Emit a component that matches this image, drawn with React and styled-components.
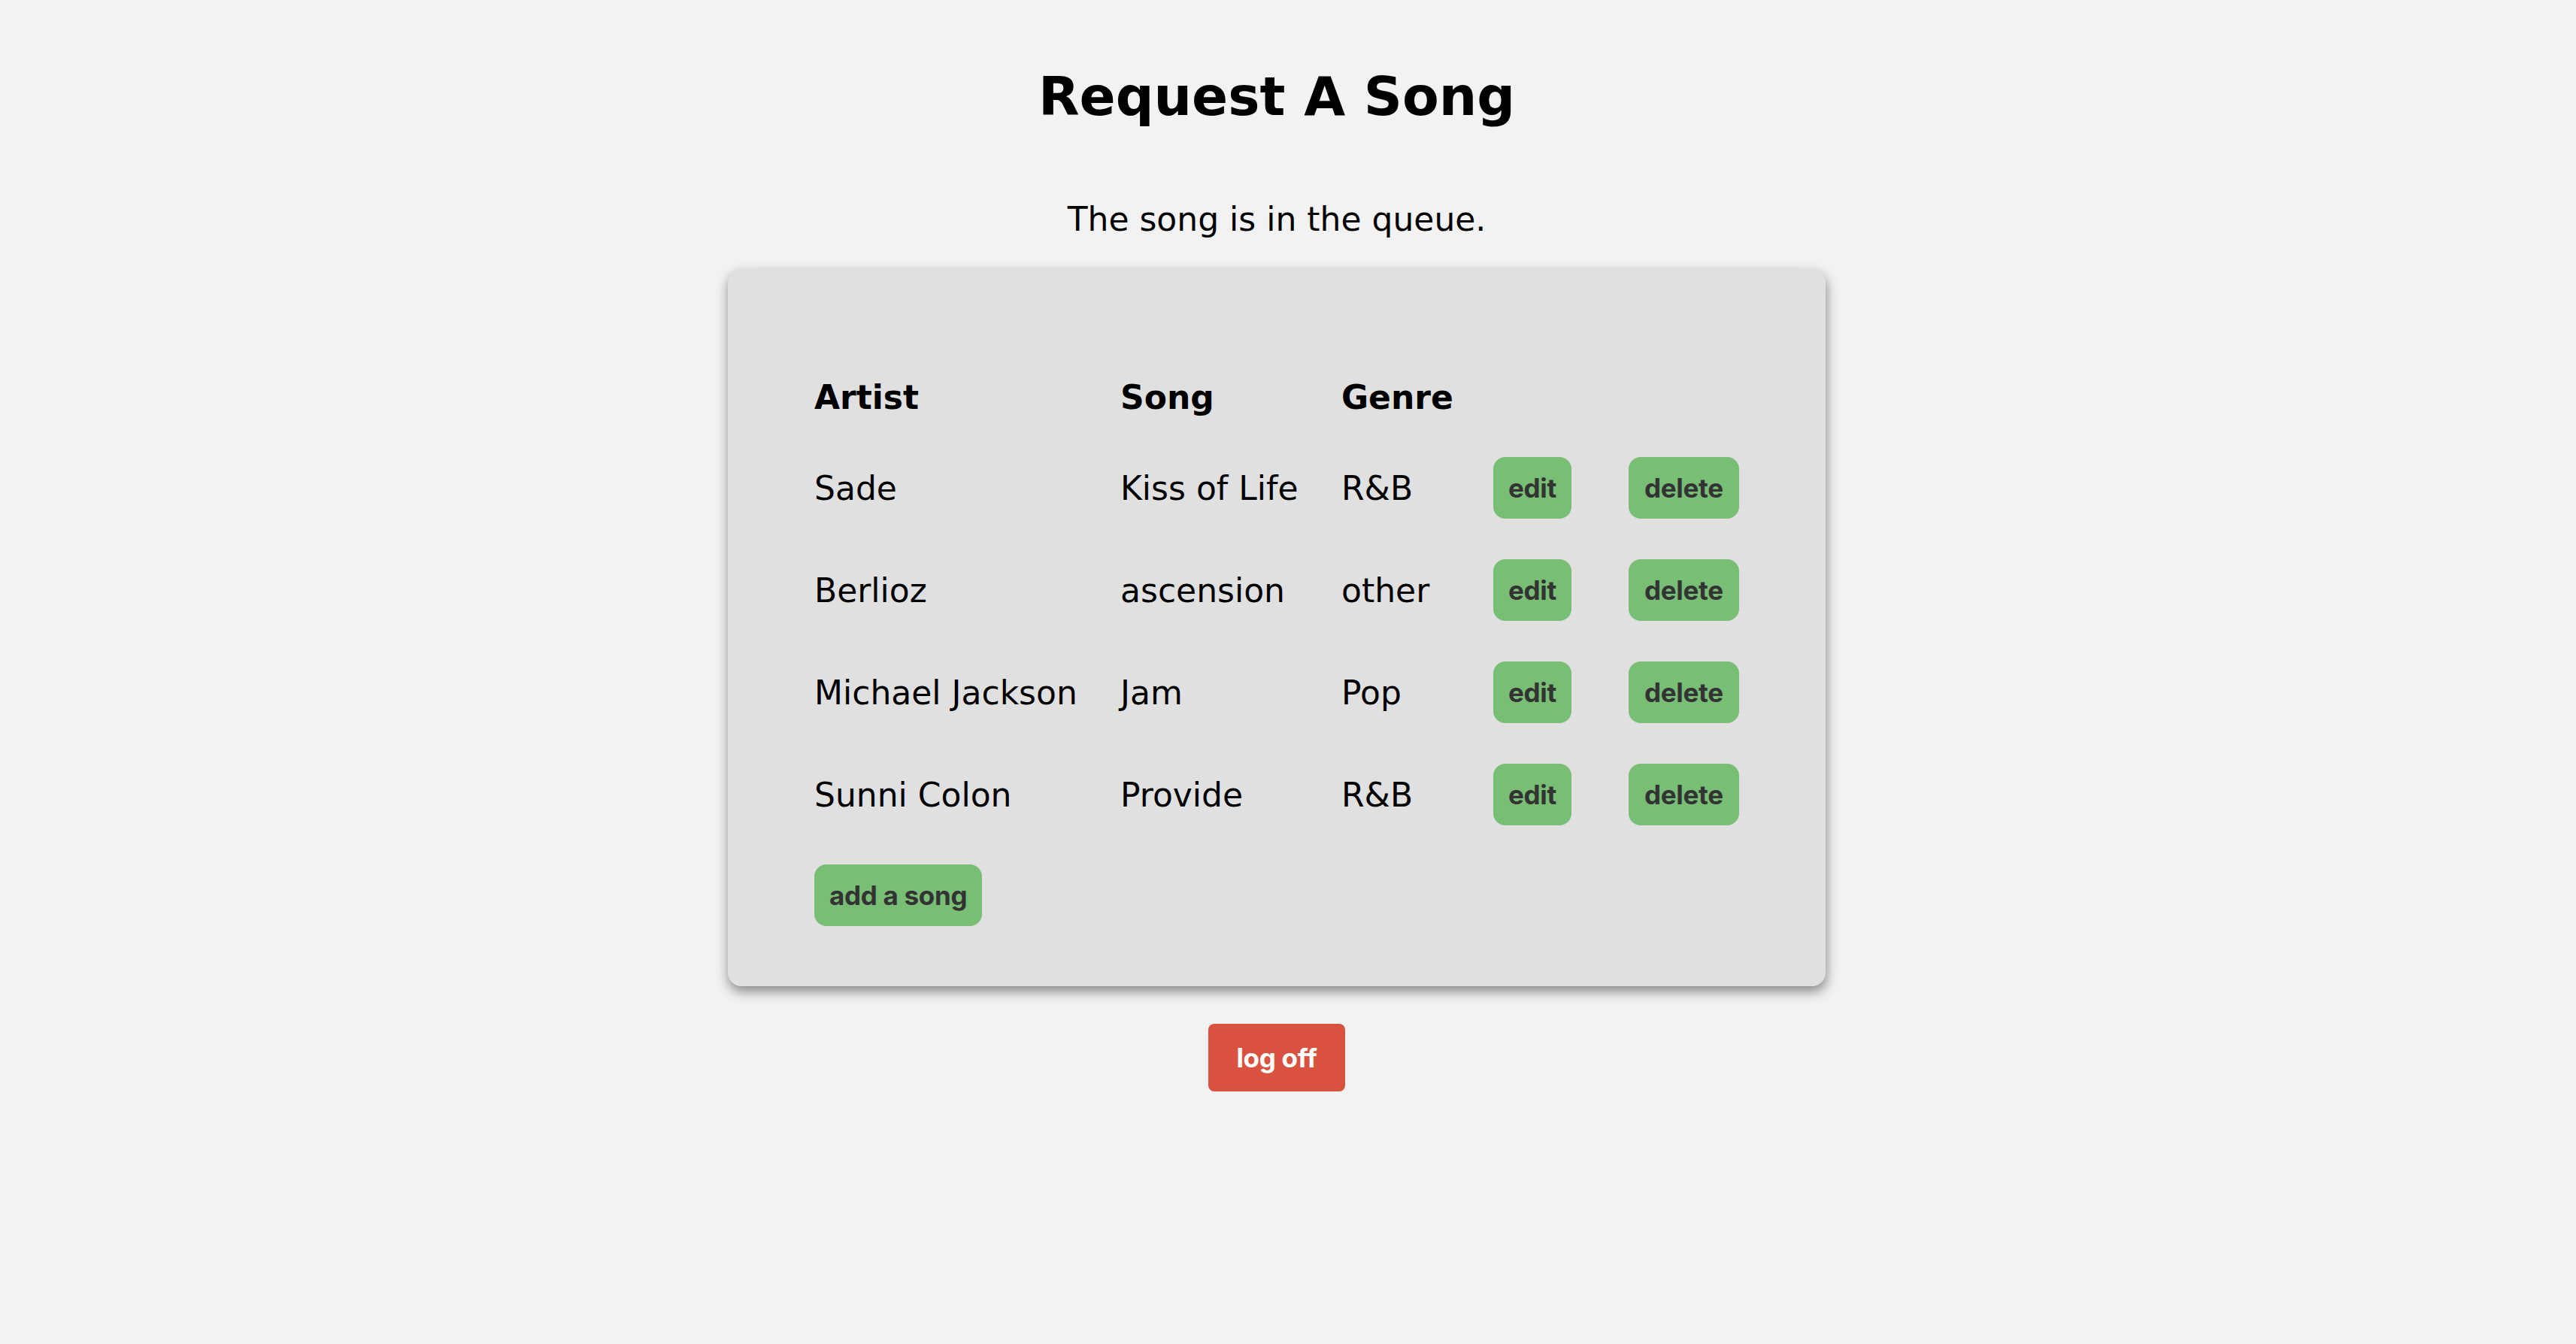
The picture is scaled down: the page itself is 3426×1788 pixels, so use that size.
import React from 'react';
import styled, { createGlobalStyle } from 'styled-components';

const GlobalStyle = createGlobalStyle`
  body {
    margin: 0;
    background-color: #f2f2f2;
    font-family: "DejaVu Sans", Verdana, sans-serif;
    color: #000;
  }
`;

const Page = styled.div`
  display: flex;
  flex-direction: column;
  align-items: center;
  padding: 93px 30px 120px 0;
`;

const Title = styled.h1`
  margin: 0;
  font-size: 71px;
  line-height: 1;
  font-weight: bold;
`;

const Message = styled.p`
  margin: 106px 0 0;
  font-size: 44px;
  line-height: 1;
`;

const Card = styled.div`
  box-sizing: border-box;
  width: 1460px;
  margin-top: 44px;
  padding: 144px 115px 80px;
  background-color: #e0e0e0;
  border-radius: 18px;
  box-shadow: 1px 7px 16px rgba(0, 0, 0, 0.45);
`;

const SongTable = styled.div`
  display: grid;
  grid-template-columns: 407px 294px 202px 180px auto;
  grid-template-rows: 52px;
  grid-auto-rows: 82px;
  row-gap: 54px;
  align-items: center;
  justify-items: start;
`;

const HeadCell = styled.div`
  font-size: 44px;
  font-weight: bold;
`;

const Cell = styled.div`
  font-size: 44px;
  white-space: nowrap;
`;

const Button = styled.button`
  height: ${(p) => (p.$tall ? 90 : 82)}px;
  padding: 0 ${(p) => p.$pad || 20}px;
  border: none;
  border-radius: ${(p) => (p.$tall ? 8 : 16)}px;
  background-color: ${(p) => p.$bg || '#78be75'};
  color: ${(p) => p.$color || '#333'};
  font-family: Inter, "Noto Sans", sans-serif;
  font-size: 35px;
  font-weight: 700;
  letter-spacing: -0.3px;
  cursor: pointer;
`;

const AddButton = styled(Button)`
  margin-top: 52px;
`;

const LogOff = styled(Button)`
  margin-top: 50px;
`;

const songs = [
  { artist: 'Sade', song: 'Kiss of Life', genre: 'R&B' },
  { artist: 'Berlioz', song: 'ascension', genre: 'other' },
  { artist: 'Michael Jackson', song: 'Jam', genre: 'Pop' },
  { artist: 'Sunni Colon', song: 'Provide', genre: 'R&B' },
];

function App() {
  return (
    <>
      <GlobalStyle />
      <Page>
        <Title>Request A Song</Title>
        <Message>The song is in the queue.</Message>
        <Card>
          <SongTable>
            <HeadCell>Artist</HeadCell>
            <HeadCell>Song</HeadCell>
            <HeadCell>Genre</HeadCell>
            <div />
            <div />
            {songs.map((s) => (
              <React.Fragment key={s.artist}>
                <Cell>{s.artist}</Cell>
                <Cell>{s.song}</Cell>
                <Cell>{s.genre}</Cell>
                <Button>edit</Button>
                <Button $pad={21}>delete</Button>
              </React.Fragment>
            ))}
          </SongTable>
          <AddButton>add a song</AddButton>
        </Card>
        <LogOff $tall $pad={37} $bg="#d95240" $color="#fff">log off</LogOff>
      </Page>
    </>
  );
}

export default App;
